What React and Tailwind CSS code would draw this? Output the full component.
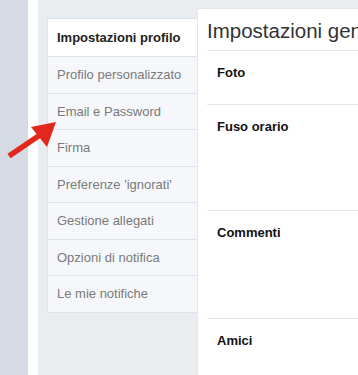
import React from "react";

const items = [
  "Profilo personalizzato",
  "Email e Password",
  "Firma",
  "Preferenze 'ignorati'",
  "Gestione allegati",
  "Opzioni di notifica",
  "Le mie notifiche",
];

export default function App() {
  return (
    <div
      className="relative flex h-[375px] w-[358px] overflow-hidden"
      style={{ fontFamily: '"Liberation Sans", Arial, sans-serif' }}
    >
      <div className="w-[28px] shrink-0 bg-[#d6dae4]" />
      <div className="w-[10px] shrink-0 bg-white" />
      <div className="flex flex-1 bg-[#e9edf0] pl-[9px]">
        <div className="mt-[18px] w-[150px] shrink-0 self-start border border-r-0 border-[#dce3ec] bg-[#f5f7fb]">
          <div className="flex h-[37px] items-center bg-white pl-[9px] text-[13px] font-bold text-[#222]">
            Impostazioni profilo
          </div>
          {items.map((t) => (
            <div
              key={t}
              className="flex h-[36.5px] items-center border-t border-[#dce3ec] pl-[9px] text-[13px] text-[#7a7a7a]"
            >
              {t}
            </div>
          ))}
        </div>
        <div className="mt-[8px] min-w-0 flex-1 overflow-hidden border-l border-t border-[#e3e7ec] bg-white pl-[9px]">
          <div className="h-[41px] whitespace-nowrap pt-[10px] text-[20.5px] leading-[24px] text-[#333]">
            Impostazioni generali
          </div>
          <div className="h-[54px] border-t border-[#e6e6e6] pl-[10px] pt-[14px] text-[13px] font-bold leading-[16px] text-[#111]">
            Foto
          </div>
          <div className="h-[106px] border-t border-[#e6e6e6] pl-[10px] pt-[14px] text-[13px] font-bold leading-[16px] text-[#111]">
            Fuso orario
          </div>
          <div className="h-[108px] border-t border-[#e6e6e6] pl-[10px] pt-[14px] text-[13px] font-bold leading-[16px] text-[#111]">
            Commenti
          </div>
          <div className="h-[60px] border-t border-[#e6e6e6] pl-[10px] pt-[14px] text-[13px] font-bold leading-[16px] text-[#111]">
            Amici
          </div>
        </div>
      </div>
      <svg
        className="absolute left-0 top-0"
        width="70"
        height="170"
        viewBox="0 0 70 170"
      >
        <line x1="9" y1="156" x2="40" y2="135" stroke="#e2281c" strokeWidth="5.5" />
        <polygon points="56,122 31,127 47,147" fill="#e2281c" />
      </svg>
    </div>
  );
}
